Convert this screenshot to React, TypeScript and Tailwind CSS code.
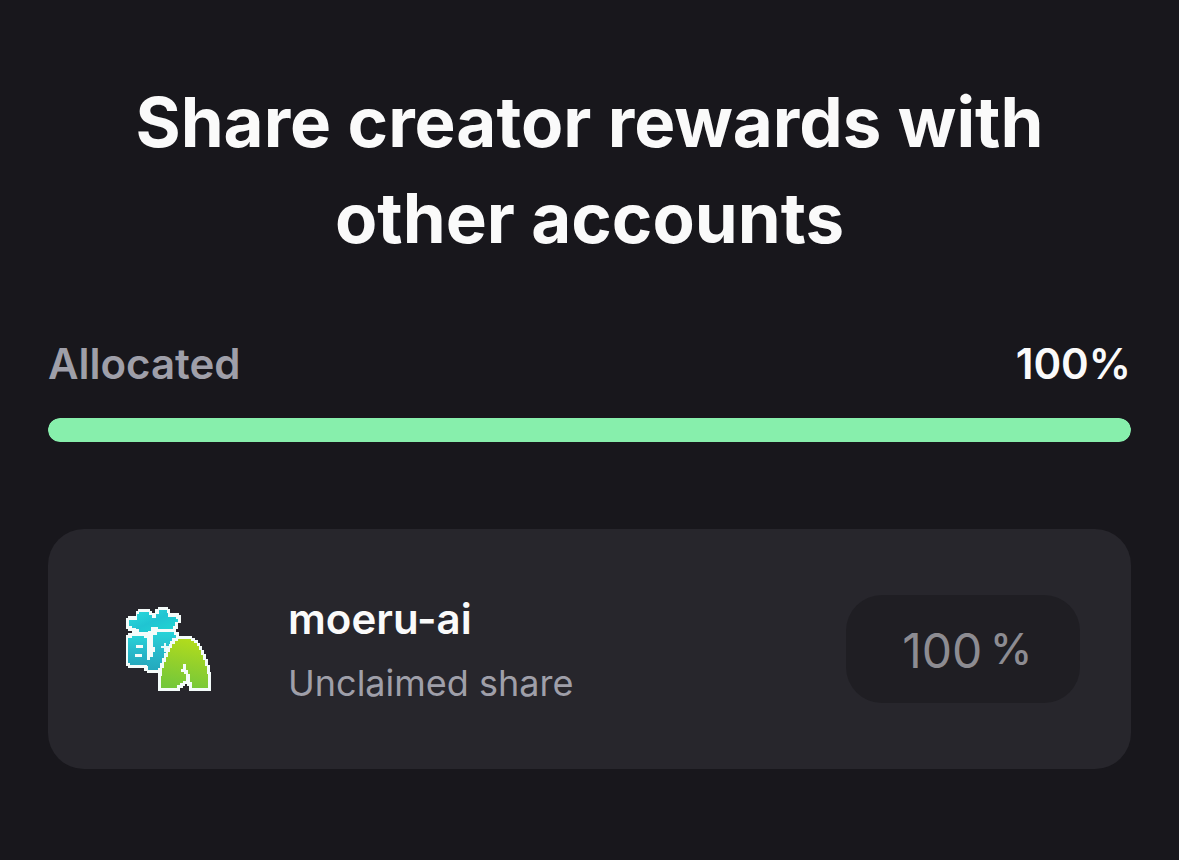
import React from 'react';

interface Share {
  id: string;
  name: string;
  status: string;
  percent: number;
}

const SHARES: Share[] = [
  { id: 'moeru-ai', name: 'moeru-ai', status: 'Unclaimed share', percent: 100 },
];

// Pixel-art avatar, drawn on a 110 unit grid
const MoeruLogo: React.FC = () => (
  <svg viewBox="-2 -1 110 110" className="w-[110px] h-[110px]" role="img" aria-label="moeru-ai avatar">
    <defs>
      <linearGradient id="clover" x1="0" y1="0" x2="1" y2="1">
        <stop offset="0" stopColor="#2adcdc" />
        <stop offset="0.5" stopColor="#20c4d2" />
        <stop offset="1" stopColor="#1fd8d2" />
      </linearGradient>
      <linearGradient id="body" x1="0" y1="0" x2="0" y2="1">
        <stop offset="0" stopColor="#27d3d8" />
        <stop offset="0.5" stopColor="#27bacb" />
        <stop offset="1" stopColor="#24a9bd" />
      </linearGradient>
      <linearGradient id="arch" x1="0.6" y1="0" x2="0.4" y2="1">
        <stop offset="0" stopColor="#b2dc1c" />
        <stop offset="0.5" stopColor="#93d02c" />
        <stop offset="1" stopColor="#74c83a" />
      </linearGradient>
    </defs>
    {/* white sticker outline */}
    <path
      fill="#f4fcfa"
      d="M23 14H35V16H37V18H40V14H43V12H53V14H55V18H64V20H66V28H63V34H61V37H64V41H77V43H80V45H83V48H85V51H87V55H89V59H91V64H93V70H95V77H96V96H74V91H72V89H70V91H68V93H65V96H43V78H32V76H29V73H13V71H11V40H13V38H17V36H13V34H11V23H13V21H21V16H23Z"
    />
    {/* clover leaves */}
    <path
      fill="url(#clover)"
      d="M24 17H34V20H37V23H41V19H44V15H52V18H53V22H61V24H63V27H60V31H58V34H43V32H36V36H33V37H24V34H21V33H17V31H14V25H22V19H24Z"
    />
    {/* left radical */}
    <path fill="url(#body)" d="M17 41H29V43H32V70H15V68H13V43H17ZM21 50V53H28V50ZM20 59V62H27V59Z" fillRule="evenodd" />
    {/* right radical */}
    <path
      fill="url(#body)"
      d="M42 37H59V40H61V43H57V46H55V49H54V53H51V58H49V63H47V68H45V73H43V75H33V71H32V65H35V62H38V57H40V52H38V40H42Z"
    />
    <path fill="#e8fbfa" d="M49 48H51V51H54V53H51V57H49V53H46V51H49Z" />
    <path
      fill="url(#arch)"
      d="M63 44H76V46H79V48H82V51H84V55H86V60H88V65H90V71H92V79H93V93H77V87H75V79H73V75H71V69H68V74H66V77H69V79H71V86H68V88H65V90H62V93H46V81H47V73H49V67H51V62H53V57H55V53H57V49H60V46H63Z"
    />
  </svg>
);

const ShareRow: React.FC<{ share: Share }> = ({ share }) => (
  <li className="flex items-center gap-12 h-60 pl-12 pr-[51px] rounded-[36px] bg-[#27262c]">
    <div className="w-36 h-36 flex shrink-0 items-center justify-center">
      <MoeruLogo />
    </div>
    <div className="flex-1 min-w-0 pt-1">
      <p className="text-[42px] leading-[60px] font-semibold text-[#fafafa]">{share.name}</p>
      <p className="mt-1 text-[36px] leading-[60px] text-[#9f9fa9]">{share.status}</p>
    </div>
    <label className="flex items-center w-[234px] h-[108px] pr-12 rounded-[36px] bg-[#1f1e23] text-[#8d8c92]">
      <input
        type="text"
        disabled
        defaultValue={share.percent}
        aria-label={`Share for ${share.name}`}
        className="flex-1 min-w-0 pt-1 pr-2 bg-transparent text-right text-[48px] leading-[72px]"
      />
      <span className="text-[42px] leading-[60px] font-medium">%</span>
    </label>
  </li>
);

const App: React.FC = () => {
  const allocated = SHARES.reduce((sum, share) => sum + share.percent, 0);

  return (
    <main className="min-h-screen px-12 pt-[74px] pb-20 bg-[#18171c] font-['Inter',sans-serif]">
      <h1 className="text-center text-[69px] leading-[96px] font-bold text-[#fafafa]">
        Share creator rewards with other accounts
      </h1>

      <section className="mt-[68px]">
        <div className="flex items-center justify-between text-[42px] leading-[60px] font-semibold">
          <span className="text-[#9f9fa9]">Allocated</span>
          <span className="text-[#fafafa]">{allocated}%</span>
        </div>
        <div className="mt-6 h-6 rounded-full overflow-hidden bg-[#27262c]">
          <div className="h-full rounded-full bg-[#87efac]" style={{ width: `${allocated}%` }} />
        </div>
      </section>

      <ul className="mt-[87px] space-y-6">
        {SHARES.map(share => (
          <ShareRow key={share.id} share={share} />
        ))}
      </ul>
    </main>
  );
};

export default App;
